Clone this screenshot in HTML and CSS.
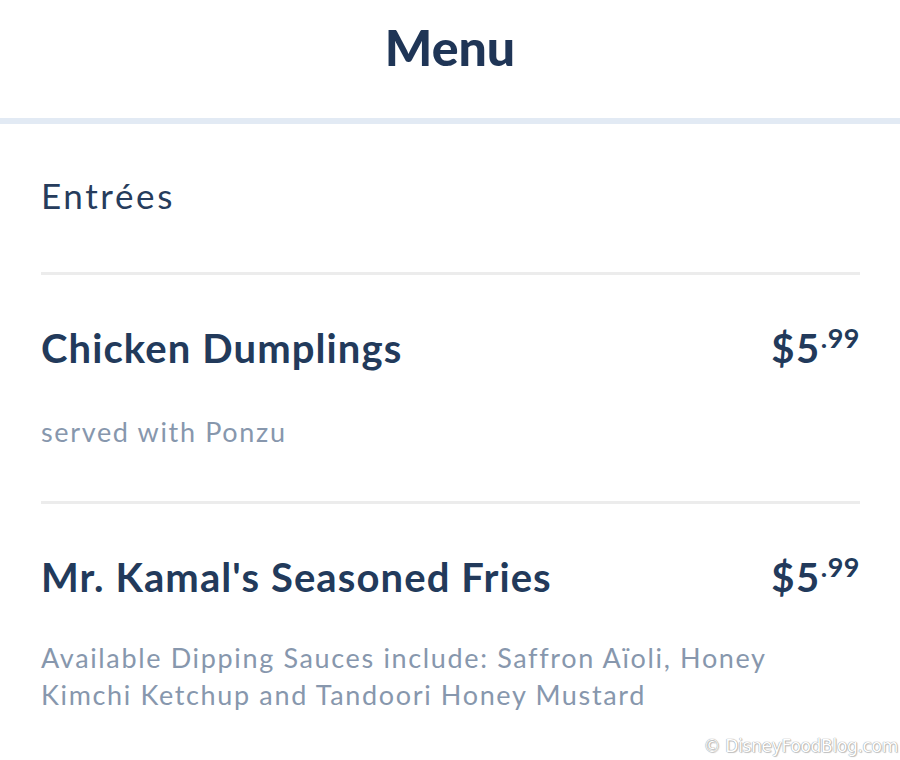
FILE: index.html
```html
<!DOCTYPE html>
<html lang="en">
<head>
<meta charset="utf-8">
<title>Menu</title>
<link rel="stylesheet" href="styles.css">
</head>
<body>
<div class="page">
  <header class="header">
    <h1 class="title">Menu</h1>
  </header>
  <main class="content">
    <h2 class="section">Entrées</h2>
    <div class="item">
      <div class="item-head">
        <span class="item-name">Chicken Dumplings</span>
        <span class="price"><span class="dollars">$5</span><span class="cents">.99</span></span>
      </div>
      <p class="desc">served with Ponzu</p>
    </div>
    <div class="item">
      <div class="item-head">
        <span class="item-name">Mr. Kamal's Seasoned Fries</span>
        <span class="price"><span class="dollars">$5</span><span class="cents">.99</span></span>
      </div>
      <p class="desc">Available Dipping Sauces include: Saffron Aïoli, Honey Kimchi Ketchup and Tandoori Honey Mustard</p>
    </div>
  </main>
  <div class="watermark">© DisneyFoodBlog.com</div>
</div>
</body>
</html>
```
FILE: styles.css
```css
* { box-sizing: border-box; }
html, body { margin: 0; padding: 0; background: #ffffff; }
body { font-family: Lato, "Open Sans", sans-serif; }
.page { position: relative; width: 900px; height: 760px; overflow: hidden; background: #fff; }
.header {
  padding: 17px 0 41px;
  border-bottom: 6px solid #e2eaf4;
}
.title {
  margin: 0;
  text-align: center;
  font-size: 50px;
  line-height: 60px;
  font-weight: 900;
  color: #1f3556;
  letter-spacing: 0;
}
.content { padding: 0 40px 0 41px; }
.section {
  margin: 46px 0 0;
  padding-bottom: 52px;
  font-size: 35px;
  line-height: 50px;
  font-weight: 400;
  color: #263c5c;
  letter-spacing: 2.6px;
  border-bottom: 3px solid #ececec;
}
.item { border-bottom: 3px solid #ececec; padding: 48px 0 51px; }
.item:last-child { border-bottom: 0; padding-bottom: 0; }
.item-head { display: flex; justify-content: space-between; align-items: flex-start; }
.item-name {
  font-size: 40px;
  line-height: 50px;
  font-weight: 700;
  color: #223a5b;
  letter-spacing: 1.1px;
}
.price { display: flex; align-items: flex-start; color: #223a5b; font-weight: 700; }
.dollars { font-size: 40px; line-height: 50px; letter-spacing: 1.5px; }
.cents { font-size: 27px; line-height: 30px; letter-spacing: 0.5px; }
.desc {
  margin: 40px 0 0;
  font-size: 27px;
  line-height: 37px;
  color: #8797ad;
  letter-spacing: 1.65px;
}
.item:last-child .desc { margin-top: 37px; }
.watermark {
  position: absolute;
  right: 2px;
  bottom: 4px;
  font-family: "DejaVu Sans", sans-serif;
  font-size: 17px;
  color: #ffffff;
  text-shadow: 0 0 1px #9a9a9a, 0 0 1px #9a9a9a, 1px 1px 1px #c8c8c8;
  letter-spacing: -0.3px;
}
```
